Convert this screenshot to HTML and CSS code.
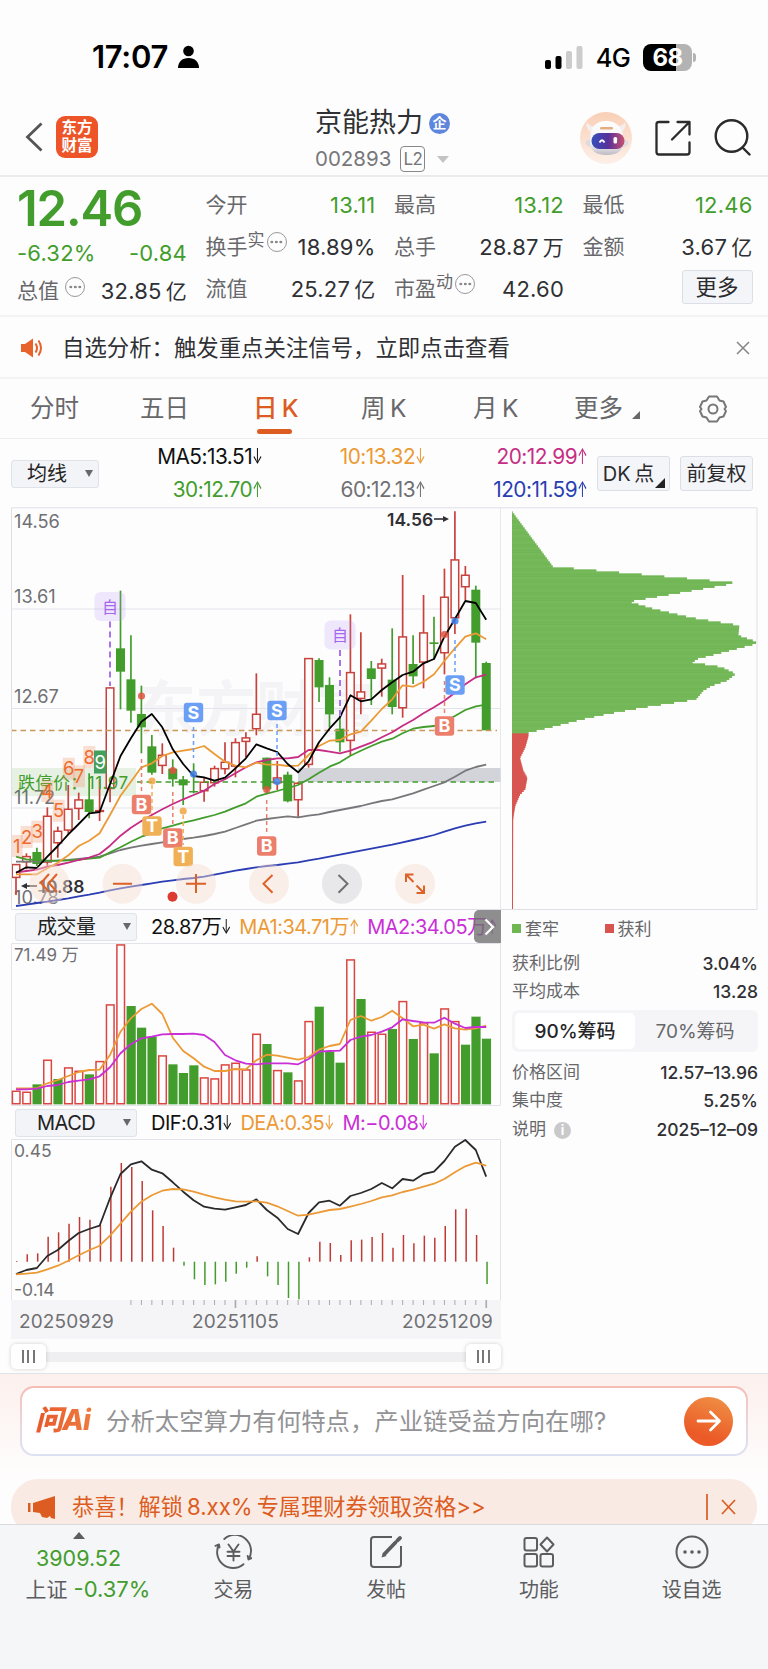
FILE: index.html
```
<!DOCTYPE html>
<html lang="zh-CN">
<head>
    <meta charset="UTF-8">
    <meta name="viewport" content="width=device-width, initial-scale=1.0">
    <title>京能热力 002893</title>
    <link rel="stylesheet" href="styles.css">
</head>
<body>

    <!-- Status bar -->
    <div class="status-bar">
        <div class="status-time">17:07
            <svg width="21" height="24" viewBox="0 0 21 24"><circle cx="10.5" cy="6" r="5.3"/><path d="M0 23c0-6 4-10 10.500-10S21 17 21 23z"/></svg>
        </div>
        <div class="status-right">
            <svg width="38" height="24" viewBox="0 0 38 24"><rect x="0" y="15" width="6" height="9" rx="2"/><rect x="10.500" y="11" width="6" height="13" rx="2"/><rect x="21" y="6" width="6" height="18" rx="2" fill="#ccc"/><rect x="31.500" y="1" width="6" height="23" rx="2" fill="#ccc"/></svg>
            <span class="network">4G</span>
            <span class="battery">68</span>
        </div>
    </div>

    <!-- Title bar -->
    <header class="title-bar">
        <div class="title-left">
            <svg width="18" height="30" viewBox="0 0 18 30" fill="none" stroke="#555" stroke-width="2.800"><path d="M16.500 1.500L2.500 15l14 13.500"/></svg>
            <div class="brand">东方<br>财富</div>
        </div>
        <div class="title-center">
            <div class="stock-name">京能热力<span class="badge">企</span></div>
            <div class="stock-code">002893<span class="level">L2</span><i class="caret"></i></div>
        </div>
        <div class="title-right">
            <svg width="52" height="52" viewBox="0 0 52 52">
                <defs>
                    <linearGradient id="face" x1="0" x2="1"><stop offset="0" stop-color="#3450bd"/><stop offset=".5" stop-color="#57309a"/><stop offset="1" stop-color="#c8506f"/></linearGradient>
                    <linearGradient id="halo" x1="0" x2="0" y1="0" y2="1"><stop offset="0" stop-color="#f9cfb6"/><stop offset="1" stop-color="#fdf0e8"/></linearGradient>
                    <linearGradient id="shell" x1="0" x2="0" y1="0" y2="1"><stop offset="0" stop-color="#fff"/><stop offset=".7" stop-color="#f1eef2"/><stop offset="1" stop-color="#bdb9c2"/></linearGradient>
                </defs>
                <circle cx="26" cy="26" r="26" fill="url(#halo)"/>
                <path d="M10 20q-5-5-3-10 2 4 8 5zM42 20q5-5 3-10-2 4-8 5z" fill="#f5eeee"/>
                <ellipse cx="27" cy="31" rx="21.500" ry="6.500" fill="#dedae1"/>
                <path d="M10 28Q10 9 26 9t18 19q0 15-17.500 15T10 28z" fill="url(#shell)"/>
                <rect x="11.500" y="21" width="33" height="16" rx="8" fill="url(#face)"/>
                <rect x="20" y="15" width="13" height="2.500" rx="1.200" fill="#e5ad7e"/>
                <path d="M19.500 30.500q2.500-4.500 5 0" fill="none" stroke="#fff" stroke-width="1.800"/>
                <rect x="33.500" y="25" width="3.600" height="6.500" rx="1.500" fill="#fff"/>
            </svg>
            <svg width="36" height="36" viewBox="0 0 36 36" fill="none" stroke="#2b2b2b" stroke-width="2.300" stroke-linecap="round" stroke-linejoin="round"><path d="M13.500 2H4Q1.500 2 1.500 4v28q0 2.500 2.500 2.500h28q2.500 0 2.500-2.500V22.500M22.500 2h12v12.500M34 2.500L17 19.500"/></svg>
            <svg width="37" height="37" viewBox="0 0 37 37" fill="none" stroke="#2b2b2b" stroke-width="2.400" stroke-linecap="round"><circle cx="17.500" cy="17" r="15.800"/><path d="M28.500 28.500l7 7"/></svg>
        </div>
    </header>

    <!-- Quote summary -->
    <section class="quote">
        <div class="quote-col first">
            <div class="price">12.46</div>
            <div class="cell down change"><span>-6.32%</span><span>-0.84</span></div>
            <div class="cell"><label>总值<i class="tip up"></i></label><b>32.85&#8201;<u>亿</u></b></div>
        </div>
        <div class="quote-col">
            <div class="cell"><label>今开</label><b class="down">13.11</b></div>
            <div class="cell"><label>换手<sup>实</sup><i class="tip"></i></label><b>18.89%</b></div>
            <div class="cell"><label>流值</label><b>25.27&#8201;<u>亿</u></b></div>
        </div>
        <div class="quote-col">
            <div class="cell"><label>最高</label><b class="down">13.12</b></div>
            <div class="cell"><label>总手</label><b>28.87&#8201;<u>万</u></b></div>
            <div class="cell"><label>市盈<sup>动</sup><i class="tip"></i></label><b>42.60</b></div>
        </div>
        <div class="quote-col">
            <div class="cell"><label>最低</label><b class="down">12.46</b></div>
            <div class="cell"><label>金额</label><b>3.67&#8201;<u>亿</u></b></div>
            <div class="cell more-cell"><button class="more-btn">更多</button></div>
        </div>
    </section>

    <div class="notice">
        <svg width="23" height="20" viewBox="0 0 23 20" fill="none" stroke="#e8622b" stroke-width="2"><path d="M1 6h4l8-5.500v19L5 14H1z" fill="#e8622b" stroke="none"/><path d="M15.500 5.500q3 4.500 0 9M18.500 2.500q5 7.500 0 15"/></svg>
        <span>自选分析：触发重点关注信号，立即点击查看</span>
        <svg class="notice-close" width="14" height="14" viewBox="0 0 14 14" stroke="#888" stroke-width="1.600"><path d="M1 1l12 12M13 1L1 13"/></svg>
    </div>

    <!-- Period tabs -->
    <nav class="tabs">
        <span>分时</span>
        <span>五日</span>
        <span class="active">日&#8201;K</span>
        <span>周&#8201;K</span>
        <span>月&#8201;K</span>
        <span class="tab-more">更多<i class="corner"></i></span>
        <span>
            <svg width="28" height="28" viewBox="0 0 28 28" fill="none" stroke="#777" stroke-width="2" stroke-linejoin="round"><path d="M10 1.500h8l2.500 4 4 1L27 12l-1.500 2L27 16l-2.500 5.500-4 1-2.500 4h-8l-2.500-4-4-1L1 16l1.500-2L1 12l2.500-5.500 4-1z"/><circle cx="14" cy="14" r="4.500"/></svg>
        </span>
    </nav>

    <!-- Moving averages -->
    <div class="ma-bar">
        <div class="select select-ma">均线<i></i></div>
        <div class="ma-grid">
            <span class="c-black">MA5:13.51<i class="arr">↓</i></span><span class="c-orange">10:13.32<i class="arr">↓</i></span><span class="c-pink">20:12.99<i class="arr">↑</i></span>
            <span class="c-green">30:12.70<i class="arr">↑</i></span><span class="c-gray">60:12.13<i class="arr">↑</i></span><span class="c-blue">120:11.59<i class="arr">↑</i></span>
        </div>
        <button class="tool dk">DK&#8201;点<i class="corner"></i></button>
        <button class="tool">前复权</button>
    </div>

    <!-- Charts -->
    <main class="charts">
        <div class="left-pane">
            <svg id="kline" class="kline" width="490" height="403" viewBox="11 507 490 403"></svg>
            <div class="indicator">
                <div class="select">成交量<i></i></div>
                <span class="c-black">28.87万<i class="arr">↓</i></span><span class="c-orange">MA1:34.71万<i class="arr">↑</i></span><span class="c-purple">MA2:34.05万<i class="arr">↑</i></span>
                <div class="next"><svg width="11" height="18" viewBox="0 0 11 18" fill="none" stroke="#fff" stroke-width="2.200"><path d="M1.500 1.500L9 9l-7.500 7.500"/></svg></div>
            </div>
            <svg id="volume" width="490" height="163" viewBox="11 943 490 163"></svg>
            <div class="indicator macd-head">
                <div class="select">MACD<i></i></div>
                <span class="c-black">DIF:0.31<i class="arr">↓</i></span><span class="c-orange">DEA:0.35<i class="arr">↓</i></span><span class="c-purple">M:−0.08<i class="arr">↓</i></span>
            </div>
            <svg id="macd" width="490" height="161" viewBox="11 1139 490 161"></svg>
            <div class="dates">
                <svg id="ticks" width="490" height="9" viewBox="11 1300 490 9"></svg>
                <div class="date-row"><span>20250929</span><span>20251105</span><span>20251209</span></div>
            </div>
            <div class="slider"><i class="handle"></i><i class="handle"></i></div>
        </div>

        <div class="right-pane">
            <svg id="chips" class="chips" width="257" height="403" viewBox="501 507 257 403"></svg>
            <div class="chip-info">
                <div class="legend"><span><i class="sq green"></i>套牢</span><span><i class="sq red"></i>获利</span></div>
                <div class="info-row"><span>获利比例</span><b>3.04%</b></div>
                <div class="info-row"><span>平均成本</span><b>13.28</b></div>
                <div class="toggle"><span class="on">90%筹码</span><span>70%筹码</span></div>
                <div class="info-row"><span>价格区间</span><b>12.57–13.96</b></div>
                <div class="info-row"><span>集中度</span><b>5.25%</b></div>
                <div class="info-row last"><span>说明<i class="info">i</i></span><b>2025–12–09</b></div>
            </div>
        </div>
    </main>

    <!-- AI search -->
    <section class="ai">
        <div class="ai-box">
            <span class="ai-logo">问Ai</span>
            <span class="ai-text">分析太空算力有何特点，产业链受益方向在哪?</span>
            <span class="ai-go"><svg width="26" height="22" viewBox="0 0 26 22" fill="none" stroke="#fff" stroke-width="2.800" stroke-linecap="round" stroke-linejoin="round"><path d="M2 11h21M14.500 2l9 9-9 9"/></svg></span>
        </div>
    </section>

    <div class="promo-wrap">
        <div class="promo">
            <svg width="27" height="23" viewBox="0 0 27 23" fill="#dc5c22"><rect x="0" y="7" width="2.500" height="9"/><path d="M5 7L27 0v23l-4-1-1-2-3 2-5-1-2-4-7-1z"/></svg>
            <span>恭喜！解锁&#8201;8.xx%&#8201;专属理财券领取资格&gt;&gt;</span>
            <svg class="promo-close" width="30" height="26" viewBox="0 0 30 26" fill="none" stroke="#dc5c22" stroke-width="1.700"><path d="M1 0v26M16 6l13 14M29 6L16 20"/></svg>
        </div>
    </div>

    <!-- Bottom navigation -->
    <footer class="bottom-nav">
        <div class="index">
            <i class="tri-up"></i>
            <span class="down points">3909.52</span>
            <span>上证<em class="down">-0.37%</em></span>
        </div>
        <div class="nav-item">
            <svg width="38" height="34" viewBox="0 0 38 34" fill="none" stroke="#5d5d60" stroke-width="1.900" stroke-linecap="round" stroke-linejoin="round"><path d="M10.300 4A16 16 0 0 1 34.500 24.500l3.300-1.500M34.500 24.500l-.8-3.500M29.500 29.200A16 16 0 0 1 5 9.500l-3.500 1.300M5 9.500l.5 3M14.500 9.500l5 7 5-7M19.500 16.500v9M13.500 16.800h12M13.500 21h12"/></svg>
            <span>交易</span>
        </div>
        <div class="nav-item">
            <svg width="34" height="34" viewBox="0 0 34 34" fill="none" stroke="#5d5d60" stroke-width="2"><path d="M23 2H5Q2 2 2 5v24q0 3 3 3h24q3 0 3-3V11"/><path d="M15.500 19L26.500 7.500M28.500 5.300L31 3" stroke-width="3.800" stroke-linecap="round"/><path d="M12.500 22.500l1.500-5 3.500 3.500z" fill="#5d5d60" stroke="none"/></svg>
            <span>发帖</span>
        </div>
        <div class="nav-item">
            <svg width="32" height="34" viewBox="0 0 32 34" fill="none" stroke="#5d5d60" stroke-width="2"><rect x="1.500" y="3" width="12.500" height="12.500" rx="2"/><rect x="1.500" y="19" width="12.500" height="12.500" rx="2"/><rect x="17.500" y="19" width="12.500" height="12.500" rx="2"/><path d="M24 2.500l6.500 7-6.500 7-6.500-7z" stroke-linejoin="round"/></svg>
            <span>功能</span>
        </div>
        <div class="nav-item">
            <svg width="34" height="34" viewBox="0 0 34 34" fill="none" stroke="#5d5d60" stroke-width="2"><circle cx="17" cy="17" r="15.500"/><g fill="#5d5d60" stroke="none"><circle cx="10" cy="17" r="1.800"/><circle cx="17" cy="17" r="1.800"/><circle cx="24" cy="17" r="1.800"/></g></svg>
            <span>设自选</span>
        </div>
    </footer>

    <script src="script.js"></script>
</body>
</html>
```
FILE: styles.css
```
* {
    box-sizing: border-box;
}
body {
    margin: 0;
    width: 768px;
    height: 1669px;
    overflow: hidden;
    background: #fdfdfe;
    color: #2f3033;
    font-family: Inter, "Noto Sans CJK SC", sans-serif;
    font-size: 21px;
    line-height: 1.2;
}
svg {
    display: block;
    flex: none;
}
i, em {
    font-style: normal;
}
b {
    font-weight: 400;
}
u {
    font-size: 21px;
    text-decoration: none;
}
button {
    font-family: inherit;
    color: #2b2b2e;
    padding: 0;
    background: #f4f5f8;
    border: 1px solid #dcdfe5;
    border-radius: 3px;
}
.down { color: #439d2c; }
.c-black { color: #111; }
.c-orange { color: #ec9a35; }
.c-pink { color: #c62d83; }
.c-green { color: #439d2c; }
.c-gray { color: #707073; }
.c-blue { color: #2a3db3; }
.c-purple { color: #c92fd6; }

/* narrow up / down arrow after a value */
.arr {
    display: inline-block;
    margin: 0 -4px 0 -3px;
    transform: scaleX(.6);
}

/* Status bar */
.status-bar {
    height: 100px;
    padding: 14px 76px 0 92px;
    display: flex;
    align-items: center;
    justify-content: space-between;
    color: #000;
}
.status-time {
    display: flex;
    align-items: center;
    gap: 10px;
    font-size: 31px;
    font-weight: 600;
    letter-spacing: -0.3px;
}
.status-right {
    display: flex;
    align-items: center;
}
.network {
    margin: 2px 13px 0 13px;
    font-size: 25.500px;
    font-weight: 500;
    letter-spacing: -0.8px;
}
.battery {
    position: relative;
    width: 49px;
    height: 27px;
    line-height: 27px;
    border-radius: 8px;
    background: linear-gradient(90deg, #000 68%, #b3b3b3 68%);
    color: #fff;
    font-size: 24px;
    font-weight: 700;
    text-align: center;
    letter-spacing: -0.5px;
}
.battery::after {
    content: "";
    position: absolute;
    left: 50px;
    top: 9px;
    width: 3px;
    height: 9px;
    border-radius: 0 3px 3px 0;
    background: #b3b3b3;
}

/* Title bar */
.title-bar {
    height: 77px;
    padding: 0 17px 0 25px;
    display: grid;
    grid-template-columns: 290px 1fr 171px;
    border-bottom: 2px solid #ebebed;
}
.title-left {
    display: flex;
    align-items: center;
    gap: 13px;
    padding-bottom: 4px;
}
.brand {
    width: 42px;
    height: 42px;
    padding-top: 3px;
    border-radius: 9px;
    background: #ed5427;
    color: #fff;
    font-size: 15.500px;
    font-weight: 700;
    line-height: 17.500px;
    text-align: center;
}
.stock-name {
    display: flex;
    align-items: center;
    height: 34px;
    margin-top: 6px;
    font-size: 27px;
}
.badge {
    width: 21px;
    height: 21px;
    margin-left: 6px;
    border-radius: 50%;
    background: #5d86dc;
    color: #fff;
    font-size: 14px;
    font-weight: 700;
    line-height: 20px;
    text-align: center;
}
.stock-code {
    display: flex;
    align-items: center;
    height: 38px;
    color: #77777a;
    font-size: 20.500px;
}
.level {
    width: 25px;
    height: 26px;
    margin: 0 12px 0 9px;
    border: 1.500px solid #88888b;
    border-radius: 4px;
    font-size: 17px;
    line-height: 24px;
    text-align: center;
    letter-spacing: -0.5px;
}
.caret {
    border: 6px solid transparent;
    border-top: 7px solid #c4c4c6;
    border-bottom: 0;
}
.title-right {
    display: flex;
    align-items: center;
    justify-content: space-between;
    padding-bottom: 3px;
}

/* Quote summary */
.quote {
    height: 140px;
    padding: 7px 16px 0 17px;
    display: grid;
    grid-template-columns: repeat(4, 170px);
    column-gap: 18.500px;
    border-bottom: 2px solid #f3f3f5;
}
.price {
    height: 49px;
    color: #439d2c;
    font-size: 49px;
    font-weight: 600;
    line-height: 49px;
    letter-spacing: -1.1px;
}
.cell {
    height: 42px;
    display: flex;
    align-items: center;
    justify-content: space-between;
    white-space: nowrap;
}
.change {
    height: 40px;
}
.first .cell:last-child {
    height: 36px;
}
.cell label {
    display: flex;
    align-items: center;
    color: #68686b;
}
.cell b, .change {
    font-size: 22px;
    letter-spacing: .2px;
}
.cell sup {
    font-size: 17px;
    line-height: 17px;
    margin-top: -14px;
}
.tip {
    width: 20px;
    height: 20px;
    margin: -10px 0 0 2px;
    border: 1.500px solid #99999c;
    border-radius: 50%;
    background: radial-gradient(circle, #88888b 1.200px, transparent 1.600px) center / 4.500px 16px repeat-x content-box;
    padding: 0 1.700px;
}
.tip.up {
    margin-left: 6px;
    margin-top: -8px;
}
.more-cell {
    justify-content: flex-end;
}
.more-btn {
    width: 71px;
    height: 34px;
    margin-top: -4px;
    font-size: 21.500px;
    line-height: 30px;
}

.notice {
    height: 62px;
    padding: 2px 18px 0 20px;
    display: flex;
    align-items: center;
    font-size: 22.400px;
    border-bottom: 2px solid #f3f3f5;
}
.notice span {
    margin-left: 19px;
}
.notice-close {
    margin-left: auto;
}

/* Tabs */
.tabs {
    position: relative;
    height: 60px;
    padding: 1px 40px 0 30px;
    display: grid;
    grid-template-columns: 110px 115px 106px 112px 101px 125px 28px;
    align-items: center;
    font-size: 24.500px;
    color: #68686b;
    border-bottom: 1px solid #eeeef0;
}
.tabs .active {
    position: relative;
    left: -2px;
    color: #dc5c22;
    font-weight: 500;
}
.tabs .active::after {
    content: "";
    position: absolute;
    left: 4px;
    bottom: -10px;
    width: 35px;
    height: 5px;
    border-radius: 3px;
    background: #dc5c22;
}
.corner {
    display: inline-block;
    border-left: 8px solid transparent;
    border-bottom: 8px solid #68686b;
}
.tab-more .corner {
    margin-left: 9px;
    margin-bottom: -2px;
}

/* Moving averages */
.ma-bar {
    height: 68px;
    padding: 1px 15px 0 11px;
    display: flex;
    align-items: center;
}
.select {
    width: 122px;
    height: 28px;
    padding: 0 5px 0 21px;
    display: flex;
    align-items: center;
    justify-content: space-between;
    background: #f3f4f7;
    border: 1px solid #dfe2e8;
    border-radius: 3px;
    color: #222;
    font-size: 20px;
}
.select i {
    border: 4px solid transparent;
    border-top: 7px solid #68686b;
    border-bottom: 0;
}
.select-ma {
    width: 88px;
    padding-left: 15px;
}
.ma-grid {
    width: 488px;
    display: grid;
    grid-template-columns: 163px 163px 162px;
    grid-auto-rows: 33px;
    align-items: center;
    text-align: right;
    font-size: 20.800px;
    letter-spacing: -0.5px;
}
.tool {
    position: relative;
    width: 73px;
    height: 35px;
    font-size: 20px;
    line-height: 32px;
    white-space: nowrap;
}
.tool.dk {
    margin: 0 10px;
    padding-right: 10px;
}
.dk .corner {
    position: absolute;
    right: 4px;
    bottom: 2px;
    border-left-width: 10px;
    border-bottom: 10px solid #222;
}

/* Charts */
.charts {
    display: flex;
    height: 866px;
    padding-left: 11px;
}
.left-pane {
    width: 490px;
}
.right-pane {
    width: 257px;
}
.charts text {
    font-family: Inter, "Noto Sans CJK SC", sans-serif;
}
.indicator {
    position: relative;
    height: 33px;
    padding-left: 4px;
    display: flex;
    align-items: center;
    font-size: 20px;
    white-space: nowrap;
    letter-spacing: -0.5px;
}
.indicator span {
    margin-right: 9px;
}
.indicator .select {
    margin-right: 14px;
    flex: none;
}
.next {
    position: absolute;
    right: 0;
    top: 0;
    width: 27px;
    height: 33px;
    padding: 8px 8px 0 10px;
    background: rgba(110, 110, 112, .78);
    border-radius: 5px 0 0 5px;
}
.dates {
    height: 39px;
    background: #f5f5f8;
}
.date-row {
    height: 26px;
    padding: 0 8px;
    display: grid;
    grid-template-columns: 173px 1fr auto;
    align-items: center;
    color: #707073;
    font-size: 19px;
    letter-spacing: .15px;
}
.slider {
    height: 34px;
    display: flex;
    align-items: center;
    justify-content: space-between;
    background: linear-gradient(#efeff2, #efeff2) center 13px / 100% 10px no-repeat;
}
.handle {
    width: 35px;
    height: 25px;
    margin-top: 1px;
    border-radius: 5px;
    background: repeating-linear-gradient(90deg, #77777a 0 2px, transparent 2px 5.500px) 11px 6px / 13px 13px no-repeat #fff;
    box-shadow: 0 0 4px rgba(0, 0, 0, .18);
}

/* Chip distribution */
.chip-info {
    padding: 3px 0 0 11px;
    width: 257px;
    font-size: 17px;
    color: #68686b;
}
.legend {
    display: flex;
    height: 32px;
    align-items: center;
}
.legend span {
    width: 92.500px;
    display: flex;
    align-items: center;
}
.sq {
    width: 9px;
    height: 9px;
    margin-right: 4px;
}
.sq.green { background: #70b753; }
.sq.red { background: #d8544f; }
.info-row {
    height: 28px;
    display: flex;
    align-items: center;
    justify-content: space-between;
}
.legend + .info-row {
    margin-top: 4px;
}
.info-row b {
    color: #303033;
    font-size: 17.500px;
    font-weight: 500;
}
.toggle {
    height: 42px;
    margin: 5px 0 6px;
    padding: 3px;
    display: flex;
    border-radius: 6px;
    background: #f5f5f8;
    font-size: 19px;
    line-height: 37px;
    text-align: center;
}
.toggle span {
    flex: 1;
    border-radius: 5px;
}
.toggle .on {
    background: #fff;
    color: #252528;
    font-weight: 500;
}
.info-row.last {
    height: 31px;
}
.info {
    display: inline-block;
    width: 17px;
    height: 17px;
    margin-left: 8px;
    border-radius: 50%;
    background: #c9c9cb;
    color: #fff;
    font-size: 13px;
    font-weight: 700;
    line-height: 17px;
    text-align: center;
}

/* AI search */
.ai {
    height: 105px;
    padding: 12px 20px 0;
    border-top: 1px solid #dfe2e8;
    background: linear-gradient(#fcf0ed, #fefdfd);
}
.ai-box {
    height: 70px;
    padding: 0 13px;
    display: flex;
    align-items: center;
    border: 2px solid transparent;
    border-radius: 14px;
    background: linear-gradient(#fff, #fff) padding-box, linear-gradient(#f5bdb4, #e9d5dc 50%, #dce1f2) border-box;
}
.ai-logo {
    width: 71px;
    font-size: 28px;
    font-weight: 800;
    font-style: italic;
    letter-spacing: -0.8px;
    background: linear-gradient(90deg, #e9572a, #ee8544);
    -webkit-background-clip: text;
    color: transparent;
}
.ai-text {
    margin-top: 2px;
    color: #939396;
    font-size: 24.400px;
    white-space: nowrap;
}
.ai-go {
    width: 49px;
    height: 49px;
    margin-left: auto;
    display: flex;
    align-items: center;
    justify-content: center;
    border-radius: 50%;
    background: linear-gradient(200deg, #f09447, #eb5a27 75%);
}
.promo-wrap {
    height: 46px;
    padding: 1px 11px 0;
    overflow: hidden;
}
.promo {
    height: 56px;
    padding: 0 21px 0 17px;
    display: flex;
    align-items: center;
    border-radius: 27px;
    background: #f9ebe3;
    color: #dc5c22;
    font-size: 22.200px;
}
.promo span {
    margin-left: 17px;
}
.promo-close {
    margin-left: auto;
}

/* Bottom navigation */
.bottom-nav {
    height: 145px;
    display: grid;
    grid-template-columns: 157px repeat(4, 152.750px);
    background: #f5f6f8;
    border-top: 1px solid #d9dbe0;
    color: #5d5d60;
}
.index {
    display: flex;
    flex-direction: column;
    align-items: center;
    padding: 7px 0 0 19px;
    white-space: nowrap;
    line-height: 31px;
}
.index em {
    margin-left: 6px;
    font-size: 22px;
}
.tri-up {
    margin: 0 0 4px -18px;
    border: 6px solid transparent;
    border-bottom: 7px solid #5d5d60;
    border-top: 0;
}
.points {
    margin-left: -19px;
    font-size: 21.500px;
}
.nav-item {
    display: flex;
    flex-direction: column;
    align-items: center;
    padding-top: 10px;
    font-size: 20px;
    gap: 9px;
}
```
FILE: script.js
```
const RED = '#c8413b', GREEN = '#439d2c';
const STEP = 10.45, START = 16;
const px = i => START + i * STEP;

// price pane values are stored in thirds of a pixel below y=500
const ky = v => 500 + v / 3;
// volume and macd panes are stored in thirds below y=905
const vy = v => 905 + v / 3;

// [high, body top, body bottom, low, up?]
const candles = [
    [1092,1092,1134,1185,1],[1060,1068,1087,1108,1],[1043,1056,1092,1098,0],[922,947,1088,1098,1],[980,992,1030,1073,1],
    [855,926,992,1003,1],[878,898,927,960,1],[820,898,936,955,0],[838,930,935,963,1],[562,562,867,907,1],
    [272,445,515,628,0],[406,538,632,668,0],[557,642,682,760,0],[705,739,818,824,0],[730,764,798,822,1],
    [778,806,838,860,0],[828,838,856,915,0],[790,873,876,880,0],[832,845,874,905,1],[797,804,850,860,1],
    [727,785,808,823,1],[715,726,800,832,1],[697,712,726,772,1],[520,641,688,706,1],[773,773,868,880,0],
    [783,832,850,870,1],[815,824,904,907,0],[846,848,901,952,1],[474,474,795,803,1],[475,480,562,606,0],
    [532,555,643,682,0],[640,686,727,755,0],[343,516,723,765,1],[397,574,597,643,1],[483,505,537,615,0],
    [476,490,506,590,1],[385,539,621,643,0],[225,409,625,653,1],[406,492,529,552,0],[285,397,488,565,1],
    [350,427,432,478,0],[206,290,460,523,1],[34,178,355,402,1],[198,224,262,300,1],[257,269,428,535,0],[485,489,691,691,0]
];

const ma5 = [1118,1102,1104,1070,1038,1003,972,940,936,853,768,715,665,642,682,748,792,828,832,842,833,805,775,733,745,756,792,817,784,727,686,652,586,604,598,570,547,525,515,490,477,410,357,303,309,359];
const ma10 = [1123,1123,1123,1105,1088,1066,1038,1022,1000,945,887,845,802,790,768,757,752,747,738,762,785,797,802,788,794,794,798,797,765,738,722,720,703,695,662,627,598,556,560,545,523,483,445,410,400,418];
const ma20 = [1117,1113,1109,1100,1095,1088,1080,1073,1062,1037,1007,983,963,945,928,912,898,885,872,852,838,820,802,787,780,775,775,771,750,750,755,760,752,740,728,712,697,677,660,640,622,602,578,553,532,524];
const ma30 = [1070,1078,1080,1082,1082,1081,1079,1076,1073,1057,1042,1025,1010,1000,985,977,968,961,953,945,935,922,910,890,881,873,864,855,838,818,800,787,767,752,738,725,716,700,686,681,678,666,648,630,619,614];
const ma60 = [1085,1085,1084,1084,1082,1080,1077,1074,1070,1060,1050,1043,1037,1032,1027,1022,1017,1013,1008,1002,995,984,973,962,957,953,949,952,947,943,936,930,924,918,910,903,898,889,880,869,858,847,830,812,801,794];
const ma120 = [1218,1214,1209,1205,1200,1195,1189,1184,1178,1171,1165,1160,1155,1150,1145,1141,1137,1134,1130,1124,1118,1112,1107,1102,1098,1095,1091,1087,1081,1076,1070,1064,1058,1052,1046,1040,1034,1027,1020,1013,1005,995,985,977,970,965];

const volumes = [557,560,538,464,522,487,497,508,468,298,118,303,368,395,451,478,504,481,517,520,478,473,493,386,417,495,502,526,348,305,441,473,163,282,380,386,372,288,402,352,445,310,348,419,335,401];
const volUp = '1101011011100010001111110101100010110101011000';
const vma1 = [550,550,550,535,525,513,501,495,494,450,380,340,312,296,327,398,438,460,485,498,498,492,493,466,449,452,458,464,456,434,423,417,345,333,347,336,317,340,364,359,371,358,370,374,370,362];
const vma2 = [553,553,551,543,540,531,527,523,514,487,445,418,400,395,388,387,387,386,390,411,450,466,476,478,475,475,475,478,462,440,438,437,405,395,390,380,367,343,348,352,353,338,356,369,366,366];

const bars = [1068,1048,1045,995,982,956,936,944,960,845,774,786,828,916,963,1028,1082,1123,1140,1138,1130,1106,1088,1054,1114,1140,1179,1183,1057,1010,1014,1050,1006,1004,996,984,1028,990,1015,992,998,963,913,911,990,1137];
const dif = [1107,1095,1089,1053,1035,1008,984,972,962,880,807,778,769,794,805,832,860,886,905,911,914,907,900,883,915,938,972,987,924,892,887,902,873,864,852,834,850,822,827,807,800,768,725,705,735,815];
const dea = [1108,1106,1103,1093,1082,1067,1051,1036,1022,992,956,920,890,871,857,852,853,860,869,877,884,889,890,889,893,904,918,932,929,922,915,912,905,897,888,877,871,861,854,845,836,822,802,784,773,782];

function line(x1, y1, x2, y2, color, width = 1, dash = '') {
    return `<line x1="${x1}" y1="${y1}" x2="${x2}" y2="${y2}" stroke="${color}" stroke-width="${width}" stroke-dasharray="${dash}"/>`;
}
function rect(x, y, w, h, fill, extra = '') {
    return `<rect x="${x}" y="${y}" width="${w}" height="${h}" fill="${fill}" ${extra}/>`;
}
function text(x, y, str, size, color, extra = '') {
    return `<text x="${x}" y="${y}" font-size="${size}" fill="${color}" ${extra}>${str}</text>`;
}
function curve(values, toY, color) {
    const pts = values.map((v, i) => `${px(i).toFixed(1)},${toY(v).toFixed(1)}`).join(' ');
    return `<polyline points="${pts}" fill="none" stroke="${color}" stroke-width="1.8" stroke-linejoin="round"/>`;
}
function hollow(x, top, bottom, color) {
    return rect(x - 3.8, top + .6, 7.6, Math.max(bottom - top - 1.2, .8), '#fdfdfe', `stroke="${color}" stroke-width="1.5"`);
}

// letter tag with its dotted leader and dot: [x, y, letter, dash from, dash to, dot y]
function tag([x, y, letter, d1, d2, dot]) {
    const fill = { S: '#6b9ff6', B: '#ec7f6c', T: '#f0b056' }[letter];
    const dotColor = { S: '#3f80ea', B: '#e0533f', T: '#f0a540' }[letter];
    return line(x, d1, x, d2, fill, 1.5, '4 3')
        + `<circle cx="${x}" cy="${dot}" r="3.6" fill="${dotColor}" opacity=".85"/>`
        + rect(x - 9.7, y - 9.7, 19.4, 19.4, fill, 'rx="3"')
        + text(x, y + 6.4, letter, 18, '#fff', 'text-anchor="middle" font-weight="700"');
}

function drawKline() {
    let s = text(136, 731, '东方财富', 60, '#f4f4f6', 'font-weight="700"');
    s += line(11, 609, 501, 609, '#e3e4eb') + line(11, 708.5, 501, 708.5, '#e3e4eb') + line(11, 808, 501, 808, '#e3e4eb');
    s += rect(298, 768, 203, 14, '#d2d4da');
    [['14.56', 527.5], ['13.61', 603], ['12.67', 703], ['11.72', 803.5], ['10.78', 903.5]].forEach(([t, y]) => {
        s += text(14, y, t, 18.2, '#707073');
    });
    s += rect(11, 768, 125, 28, '#439d2c', 'opacity=".12"');

    candles.forEach(([hi, top, bottom, lo, up], i) => {
        const x = px(i), color = up ? RED : GREEN;
        s += line(x, ky(hi), x, ky(lo), color, 1.7);
        s += up ? hollow(x, ky(top), ky(bottom), color) : rect(x - 4.5, ky(top), 9, Math.max(ky(bottom) - ky(top), 1.5), color);
    });
    s += line(11, 730.5, 497, 730.5, '#c99757', 1.4, '5.5 4');
    s += line(137, 782, 497, 782, '#439d2c', 1.6, '5.5 4');
    s += text(18, 789, '跌停价：11.97', 17, '#439d2c', 'textLength="110"');

    s += curve(ma120, ky, '#2a3db3') + curve(ma60, ky, '#77777a') + curve(ma30, ky, GREEN);
    s += curve(ma20, ky, '#c62d83') + curve(ma10, ky, '#ec9a35') + curve(ma5, ky, '#000');

    [[50,1038],[80,1011],[112,995],[142,873],[176,932],[206,806],[237,829],[268,771]].forEach(([x, y], n) => {
        s += rect(x / 3 - 6, ky(y) - 11, 12, 22, 'rgba(240,130,80,.25)');
        s += text(x / 3, ky(y) + 6.5, n + 1, 18.5, '#ef6b2d', 'text-anchor="middle"');
    });
    s += rect(94, 750.5, 12.5, 23, '#45a05c') + text(100.2, 769, '9', 18.5, '#fff', 'text-anchor="middle"');

    [[110, 606.5, 686], [340, 635, 716]].forEach(([x, y, end]) => {
        s += line(x, y + 15, x, end, '#a873ee', 2, '6 4');
        s += rect(x - 15.5, y - 14.5, 31, 29, '#b990f5', 'rx="6" opacity=".2"');
        s += text(x, y + 6.3, '自', 16, '#a766ee', 'text-anchor="middle"');
    });

    [[193.5,712.5,'S',727,758,774],[277,710.5,'S',724,756,781.5],[455,685,'S',640,674,621],
     [141.5,804.5,'B',759,793,696],[172.8,838,'B',792,826,770.5],[266.7,846,'B',800,834,789.5],[444.5,726,'B',681,714,634.5],
     [152,826,'T',785,814,781],[183.2,856.5,'T',815,845,811]].forEach(t => s += tag(t));

    s += text(387, 525.5, '14.56', 17.5, '#303033', 'font-weight="600"') + text(38.5, 892.5, '10.88', 17.5, '#303033', 'font-weight="600"');
    s += line(434, 519, 446, 519, '#303033', 1.6) + '<path d="M449 519l-6-3v6z" fill="#303033"/>';
    s += line(25, 886, 37, 886, '#303033', 1.6) + '<path d="M21 886l6-3v6z" fill="#303033"/>';

    // chart controls
    [49.3, 122.6, 195.9, 269, 342, 415].forEach((x, i) => {
        s += `<circle cx="${x}" cy="883.7" r="20" fill="${i === 4 ? '#d4d4d6' : '#f6dccf'}" opacity="${i === 4 ? .5 : .45}"/>`;
    });
    s += '<g fill="none" stroke="#dc6228" stroke-width="2"><path d="M49 874l-8 9 8 9M57 874l-8 9 8 9M113 883.700h19M186 883.700h20M196 874v19M272.500 875l-9 8.700 9 9"/>'
        + '<path d="M406 882v-7.500h7.500M406.500 875l7 7M424 885.500v7.500h-7.500M423.500 892.500l-7-7"/><path d="M338.500 875l9 8.700-9 9" stroke="#707073"/></g>';
    s += '<circle cx="172.500" cy="896.700" r="5" fill="#dd3b31"/>';
    s += '<path d="M501 507.800H11.500V909.500H501M500.800 508v402" fill="none" stroke="#dfe0e7"/>';
    document.getElementById('kline').innerHTML = s;
}

function drawVolume() {
    let s = '<path d="M11.500 943.500H500.500V1105.500H11.500z" fill="none" stroke="#e3e4eb"/>';
    s += text(14, 961, '71.49 万', 17, '#707073');
    volumes.forEach((v, i) => {
        const x = px(i) + .2;
        s += volUp[i] === '1' ? hollow(x, vy(v), vy(598), '#dc4640') : rect(x - 4.6, vy(v), 9.2, vy(598) - vy(v), GREEN);
    });
    s += curve(vma1, vy, '#ec9a35') + curve(vma2, vy, '#c92fd6');
    document.getElementById('volume').innerHTML = s;
}

function drawMacd() {
    let s = '<path d="M11.500 1300V1139.500H500.500V1300" fill="none" stroke="#e3e4eb"/>';
    bars.forEach((v, i) => {
        const x = px(i) + .8;
        s += line(x, vy(1070), x, vy(v), v < 1070 ? '#bd3a35' : GREEN, 1.5);
    });
    s += curve(dif, vy, '#2a2a2c') + curve(dea, vy, '#ec9a35');
    s += text(14, 1157, '0.45', 17.5, '#707073') + text(14, 1296, '-0.14', 17.5, '#707073');
    document.getElementById('macd').innerHTML = s;

    let t = '';
    for (let i = 11; i < 46; i++) {
        t += line(px(i), 1300, px(i), i === 21 || i === 45 ? 1308 : 1305, '#aaaaae', i === 21 || i === 45 ? 1.6 : 1);
    }
    document.getElementById('ticks').innerHTML = t;
}

function drawChips() {
    const outline = [[34,37],[200,160],[203,210],[246,697],[250,690],[303,385],[325,460],[352,575],[375,718],[405,715],[424,770],[430,765],[475,590],[486,578],[500,665],[520,707],[540,680],[555,635],[570,610],[596,588],[620,430],[640,320],[655,250],[696,86],[708,85],[740,76],[772,60],[810,70],[832,82],[865,76],[882,60],[915,46],[945,41],[960,39.5],[1227,39]];
    let s = '';
    for (let v = 34; v < 1226; v += 6) {
        let k = 0;
        while (k < outline.length - 2 && outline[k + 1][0] <= v + 2) k++;
        const [v1, u1] = outline[k], [v2, u2] = outline[k + 1];
        const u = Math.max(u1 + (u2 - u1) * (v + 2 - v1) / (v2 - v1), 38.5);
        s += rect(512, ky(v), (u - 36) / 3, 2.6, v < 695 ? (v % 18 < 12 ? '#71b655' : '#75b95a') : '#d8544f');
    }
    s += '<path d="M501 507.800H757V909.500H501" fill="none" stroke="#dfe0e7"/>';
    document.getElementById('chips').innerHTML = s;
}

drawKline();
drawVolume();
drawMacd();
drawChips();
```
